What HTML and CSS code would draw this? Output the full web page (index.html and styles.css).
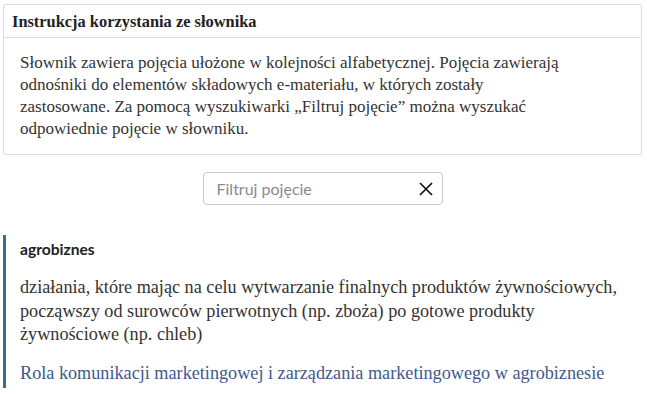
FILE: index.html
```html
<!DOCTYPE html>
<html lang="pl">
<head>
  <meta charset="UTF-8" />
  <title>Słownik pojęć</title>
  <link rel="stylesheet" href="styles.css">
</head>
<body>
  <div class="instruction">
    <div class="instruction-title">Instrukcja korzystania ze słownika</div>
    <div class="instruction-body">
      Słownik zawiera pojęcia ułożone w kolejności alfabetycznej. Pojęcia zawierają<br>
      odnośniki do elementów składowych e-materiału, w których zostały<br>
      zastosowane. Za pomocą wyszukiwarki „Filtruj pojęcie” można wyszukać<br>
      odpowiednie pojęcie w słowniku.
    </div>
  </div>

  <div class="filter">
    <div class="filter-box">
      <input type="text" class="filter-input" placeholder="Filtruj pojęcie">
      <button class="filter-clear" aria-label="Wyczyść">
        <svg width="16" height="16" viewBox="0 0 16 16">
          <path d="M2 2 L14 14 M14 2 L2 14" stroke="#111" stroke-width="1.7" fill="none" />
        </svg>
      </button>
    </div>
  </div>

  <div class="term">
    <div class="term-name">agrobiznes</div>
    <p class="term-def">działania, które mając na celu wytwarzanie finalnych produktów żywnościowych,
      począwszy od surowców pierwotnych (np. zboża) po gotowe produkty
      żywnościowe (np. chleb)</p>
    <a class="term-link" href="#">Rola komunikacji marketingowej i zarządzania marketingowego w agrobiznesie</a>
  </div>
</body>
</html>
```

FILE: styles.css
```css
* {
  margin: 0;
  padding: 0;
  box-sizing: border-box;
}

body {
  background: #fff;
  color: #333;
  font-family: 'Liberation Serif', serif;
  padding: 4px 5px 0 3px;
}

.instruction {
  border: 1px solid #ddd;
  border-radius: 2px;
}

.instruction-title {
  font-weight: bold;
  font-size: 16.4px;
  line-height: 18px;
  color: #222;
  padding: 8px 8px 6px;
  border-bottom: 1px solid #ddd;
}

.instruction-body {
  font-size: 17px;
  line-height: 22px;
  color: #333;
  padding: 14px 16px 14px;
}

.filter {
  display: flex;
  justify-content: center;
  margin-top: 17px;
}

.filter-box {
  display: flex;
  align-items: center;
  width: 240px;
  height: 33px;
  border: 1px solid #c8c8c8;
  border-radius: 4px;
  padding: 0 8px 0 13px;
}

.filter-input {
  flex: 1;
  min-width: 0;
  border: none;
  outline: none;
  font-family: Lato, sans-serif;
  font-size: 16px;
  color: #333;
  background: transparent;
}

.filter-input::placeholder {
  color: #8a8a8a;
}

.filter-clear {
  border: none;
  background: none;
  display: flex;
  padding: 0;
}

.term {
  margin-top: 30px;
  border-left: 3px solid #3f6a88;
  padding: 5px 20px 4px 14px;
}

.term-name {
  font-family: Lato, sans-serif;
  font-weight: bold;
  font-size: 15.6px;
  color: #222;
}

.term-def {
  font-size: 18.2px;
  line-height: 23.5px;
  color: #333;
  margin-top: 18px;
}

.term-link {
  display: block;
  font-size: 18.2px;
  color: #3d5a8f;
  text-decoration: none;
  margin-top: 16px;
}
```
